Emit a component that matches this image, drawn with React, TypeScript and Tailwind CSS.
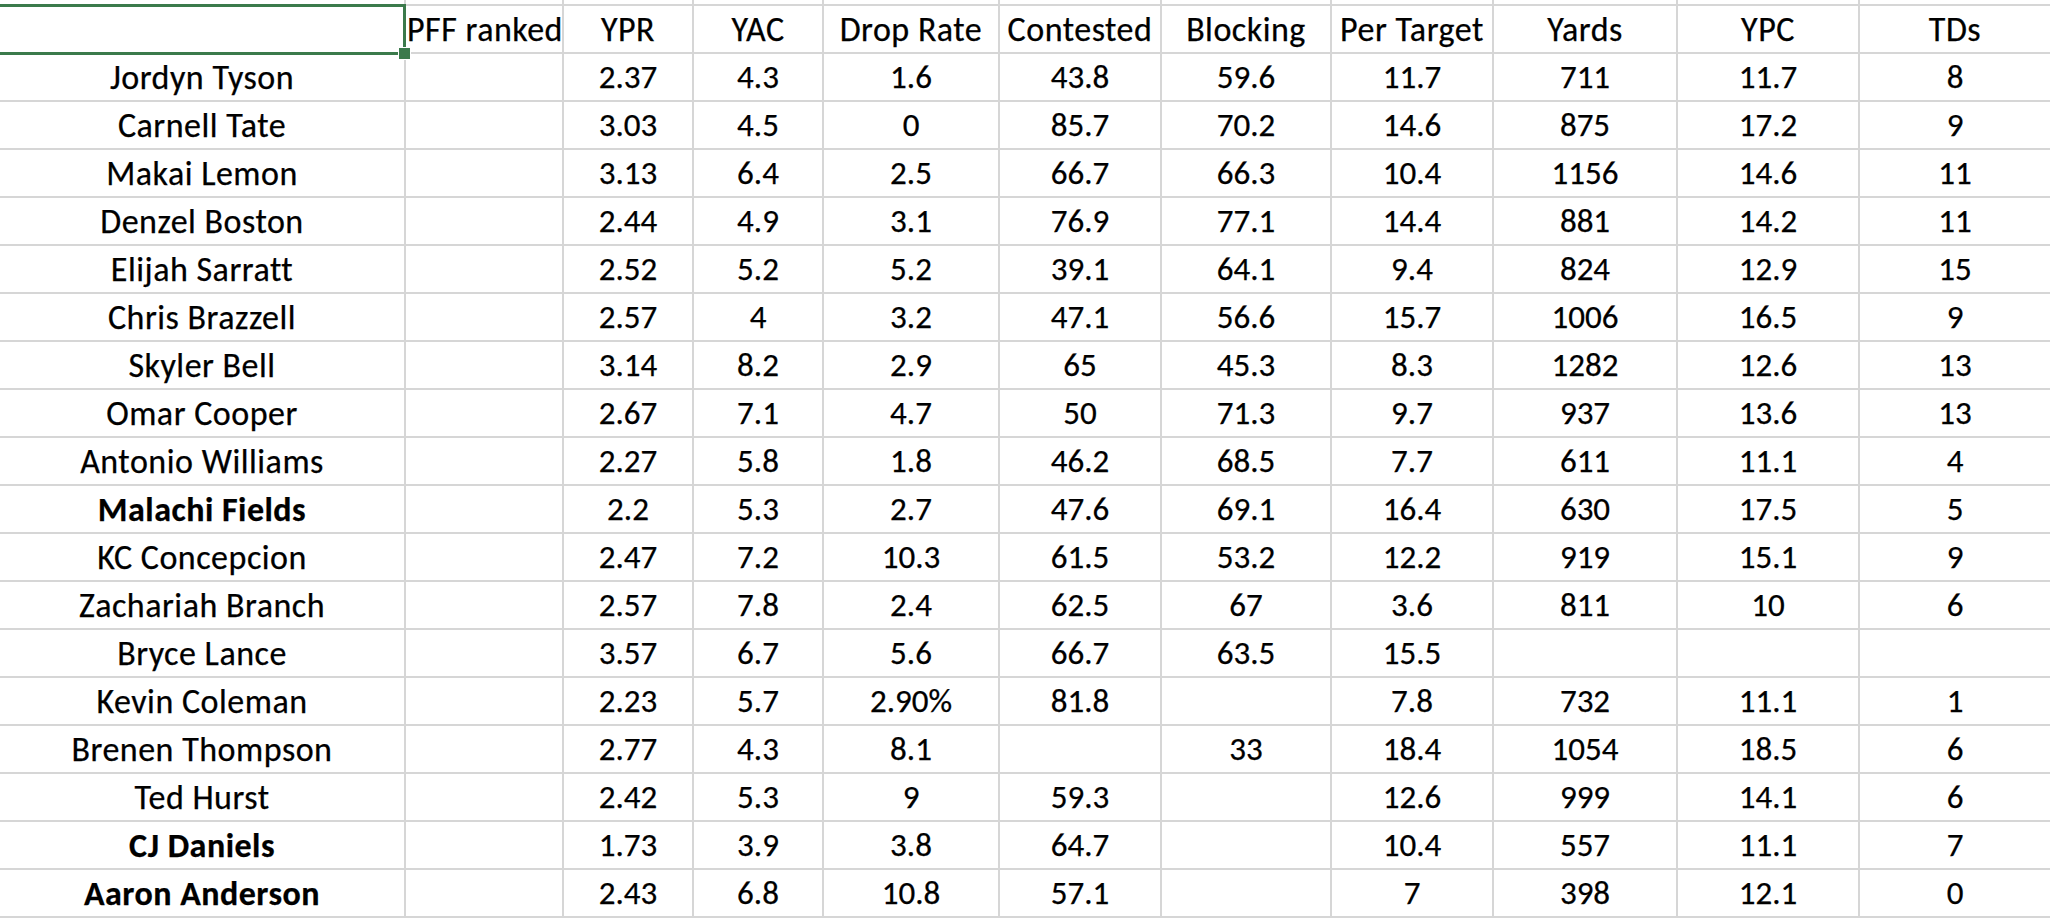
import React from 'react';

// column widths in px, border included
const COLS = "grid-cols-[406px_158px_130px_130px_176px_162px_170px_162px_184px_182px_192px]";

const headers = ["PFF ranked", "YPR", "YAC", "Drop Rate", "Contested", "Blocking", "Per Target", "Yards", "YPC", "TDs"];

type Row = { name: string; bold?: boolean; cells: string[] };

const rows: Row[] = [
  { name: "Jordyn Tyson", cells: ["", "2.37", "4.3", "1.6", "43.8", "59.6", "11.7", "711", "11.7", "8"] },
  { name: "Carnell Tate", cells: ["", "3.03", "4.5", "0", "85.7", "70.2", "14.6", "875", "17.2", "9"] },
  { name: "Makai Lemon", cells: ["", "3.13", "6.4", "2.5", "66.7", "66.3", "10.4", "1156", "14.6", "11"] },
  { name: "Denzel Boston", cells: ["", "2.44", "4.9", "3.1", "76.9", "77.1", "14.4", "881", "14.2", "11"] },
  { name: "Elijah Sarratt", cells: ["", "2.52", "5.2", "5.2", "39.1", "64.1", "9.4", "824", "12.9", "15"] },
  { name: "Chris Brazzell", cells: ["", "2.57", "4", "3.2", "47.1", "56.6", "15.7", "1006", "16.5", "9"] },
  { name: "Skyler Bell", cells: ["", "3.14", "8.2", "2.9", "65", "45.3", "8.3", "1282", "12.6", "13"] },
  { name: "Omar Cooper", cells: ["", "2.67", "7.1", "4.7", "50", "71.3", "9.7", "937", "13.6", "13"] },
  { name: "Antonio Williams", cells: ["", "2.27", "5.8", "1.8", "46.2", "68.5", "7.7", "611", "11.1", "4"] },
  { name: "Malachi Fields", bold: true, cells: ["", "2.2", "5.3", "2.7", "47.6", "69.1", "16.4", "630", "17.5", "5"] },
  { name: "KC Concepcion", cells: ["", "2.47", "7.2", "10.3", "61.5", "53.2", "12.2", "919", "15.1", "9"] },
  { name: "Zachariah Branch", cells: ["", "2.57", "7.8", "2.4", "62.5", "67", "3.6", "811", "10", "6"] },
  { name: "Bryce Lance", cells: ["", "3.57", "6.7", "5.6", "66.7", "63.5", "15.5", "", "", ""] },
  { name: "Kevin Coleman", cells: ["", "2.23", "5.7", "2.90%", "81.8", "", "7.8", "732", "11.1", "1"] },
  { name: "Brenen Thompson", cells: ["", "2.77", "4.3", "8.1", "", "33", "18.4", "1054", "18.5", "6"] },
  { name: "Ted Hurst", cells: ["", "2.42", "5.3", "9", "59.3", "", "12.6", "999", "14.1", "6"] },
  { name: "CJ Daniels", bold: true, cells: ["", "1.73", "3.9", "3.8", "64.7", "", "10.4", "557", "11.1", "7"] },
  { name: "Aaron Anderson", bold: true, cells: ["", "2.43", "6.8", "10.8", "57.1", "", "7", "398", "12.1", "0"] },
];

const cell = "h-[48px] border-r-2 border-b-2 border-[#d6d6d6] leading-[47px] whitespace-nowrap overflow-hidden";
const words = "text-[34px] tracking-[0.5px]";

export default function App() {
  return (
    <div className="w-[2050px] h-[918px] overflow-hidden bg-white text-black text-[33px] font-['Carlito','Lato',sans-serif] [-webkit-text-stroke:0.25px_black]">
      <div className={`grid ${COLS}`}>
        {/* sliver of the row above */}
        {Array.from({ length: 11 }).map((_, i) => (
          <div key={i} className="h-[6px] border-r-2 border-b-2 border-[#d6d6d6]" />
        ))}

        {/* header row */}
        <div className={`${cell} relative overflow-visible`}>
          <div className="absolute left-[-4px] top-[-2px] right-[-2px] bottom-[-3px] border-[3px] border-[#3b7a4b] z-10">
            <div className="absolute right-[-8px] bottom-[-8px] w-[13px] h-[13px] bg-[#3b7a4b] border border-white" />
          </div>
        </div>
        {headers.map((h, i) => (
          <div key={h} className={`${cell} ${words} ${i === 0 ? "text-left pl-[1px]" : "text-center"}`}>
            {h}
          </div>
        ))}

        {rows.map((r) => (
          <React.Fragment key={r.name}>
            <div className={`${cell} ${words} text-center ${r.bold ? "font-bold" : ""}`}>{r.name}</div>
            {r.cells.map((v, i) => (
              <div key={i} className={`${cell} text-center`}>{v}</div>
            ))}
          </React.Fragment>
        ))}
      </div>
    </div>
  );
}
